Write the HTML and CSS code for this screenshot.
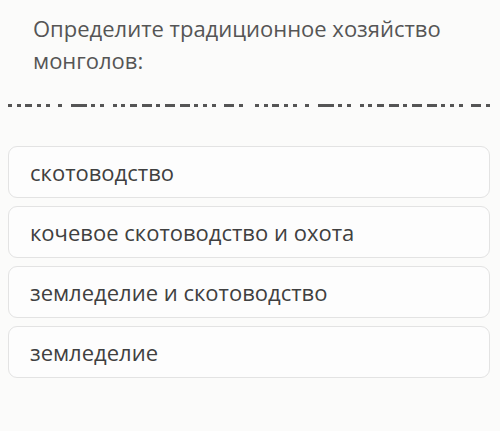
FILE: index.html
```html
<!DOCTYPE html>
<html lang="ru">
<head>
    <meta charset="UTF-8">
    <meta name="viewport" content="width=device-width, initial-scale=1.0">
    <title>Тест</title>
    <link rel="stylesheet" href="styles.css">
</head>
<body>
    <div class="quiz">
        <div class="question">Определите традиционное хозяйство монголов:</div>

        <div class="divider">
            <div class="dash-group">
                <span class="a"></span><span class="a"></span><span class="b"></span><span class="a"></span><span class="a"></span>
                <span class="a sp"></span><span class="d sp"></span><span class="a"></span><span class="a"></span>
                <span class="a sp"></span><span class="a"></span><span class="b"></span><span class="c"></span><span class="a"></span>
                <span class="c"></span><span class="c"></span><span class="a"></span><span class="a"></span><span class="a"></span>
                <span class="c sp"></span><span class="a"></span>
            </div>
            <div class="dash-group">
                <span class="a"></span><span class="a"></span><span class="b"></span><span class="a"></span><span class="a"></span>
                <span class="a sp"></span><span class="d sp"></span><span class="a"></span><span class="a"></span>
                <span class="a sp"></span><span class="a"></span><span class="b"></span><span class="c"></span><span class="a"></span>
                <span class="c"></span><span class="c"></span><span class="a"></span><span class="a"></span><span class="a"></span>
                <span class="c sp"></span><span class="a"></span>
            </div>
        </div>

        <div class="options">
            <div class="option">скотоводство</div>
            <div class="option">кочевое скотоводство и охота</div>
            <div class="option">земледелие и скотоводство</div>
            <div class="option">земледелие</div>
        </div>
    </div>
</body>
</html>
```

FILE: styles.css
```css
body {
    margin: 0;
    padding: 0;
    background-color: #fbfbfa;
    font-family: 'Open Sans', 'Noto Sans', sans-serif;
    color: #444;
}

.quiz {
    padding: 12px 8px 0 8px;
}

.question {
    padding: 0 30px 0 25px;
    font-size: 22px;
    line-height: 32px;
    color: #555;
}

.divider {
    display: flex;
    gap: 12px;
    margin: 28px 2px 0 0;
    height: 3px;
}

.dash-group {
    flex: 1;
    display: flex;
    justify-content: space-between;
}

.dash-group span {
    display: block;
    height: 3px;
    background: #555;
}

.dash-group .a { width: 4px; }
.dash-group .b { width: 7px; }
.dash-group .c { width: 10px; }
.dash-group .d { width: 16px; }
.dash-group .sp { margin-left: 4px; }

.options {
    margin-top: 39px;
    display: flex;
    flex-direction: column;
    gap: 8px;
    margin-right: 2px;
}

.option {
    height: 50px;
    display: flex;
    align-items: center;
    padding-left: 21px;
    border: 1px solid #e3e3e3;
    border-radius: 9px;
    background: #fdfdfd;
    font-size: 22px;
    color: #404040;
}
```
